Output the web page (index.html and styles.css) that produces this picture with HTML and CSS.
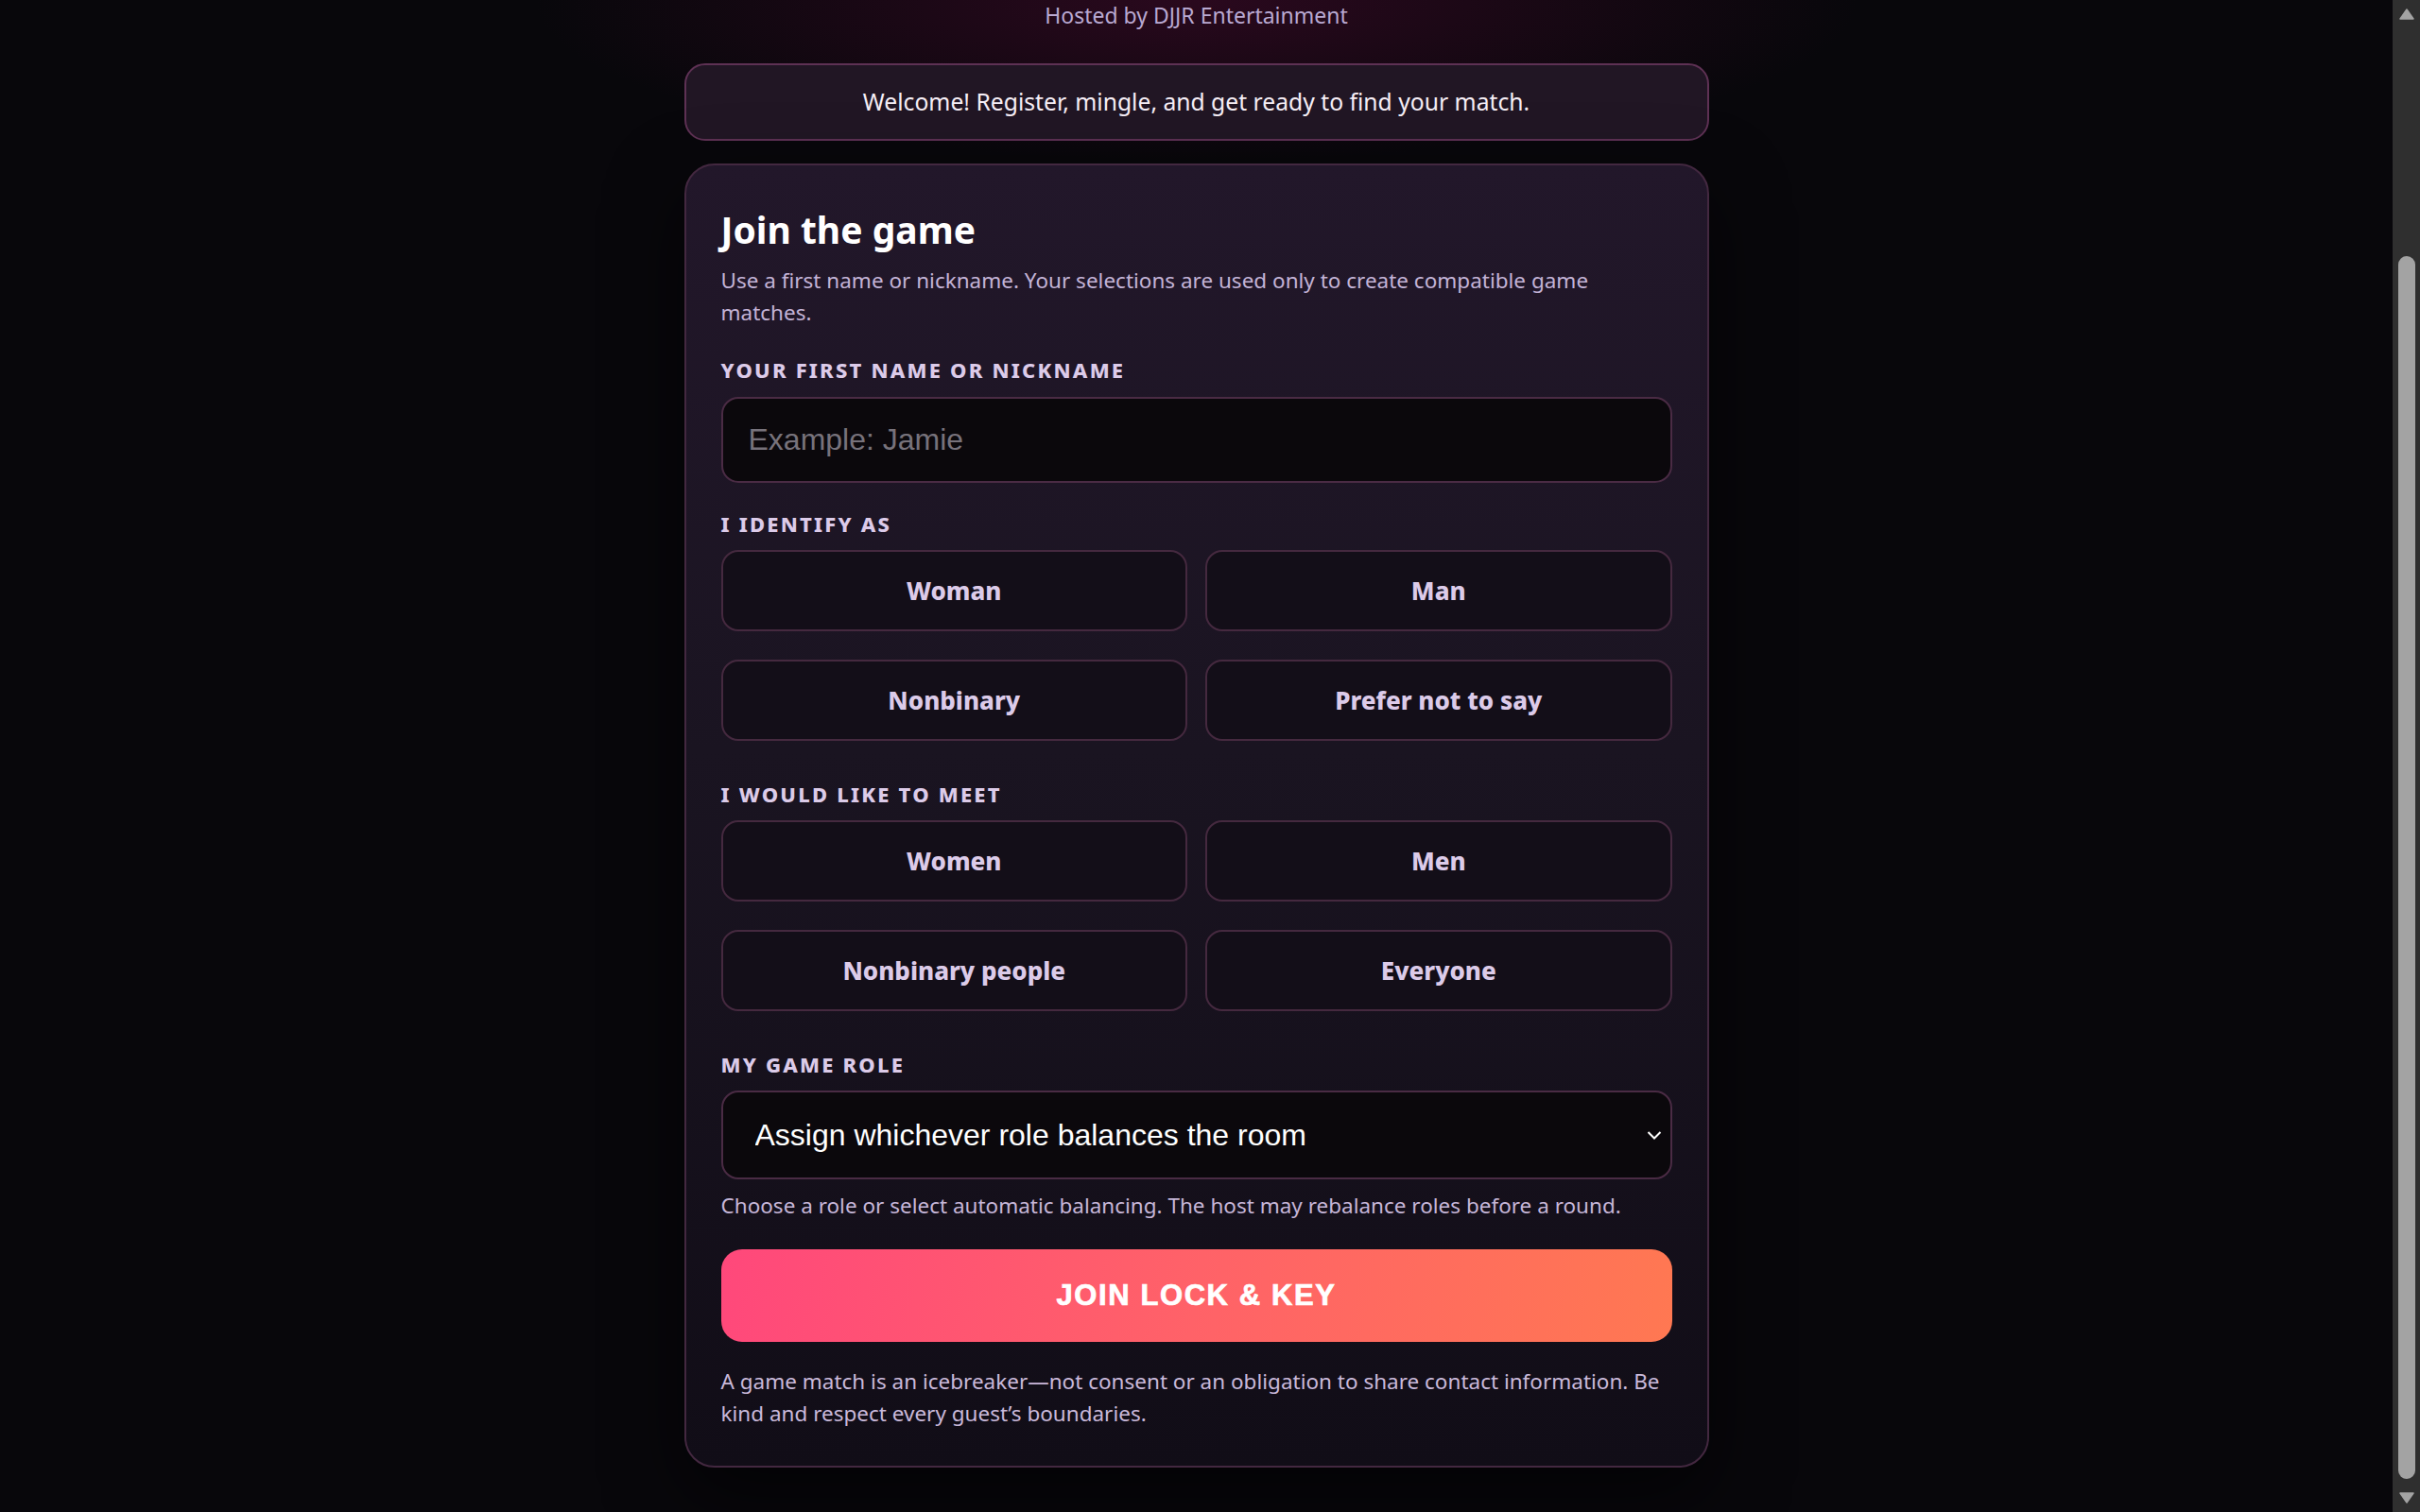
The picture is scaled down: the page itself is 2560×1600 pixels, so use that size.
FILE: index.html
```html
<!DOCTYPE html>
<html lang="en">
<head>
    <meta charset="UTF-8">
    <meta name="viewport" content="width=device-width, initial-scale=1.0">
    <title>Lock &amp; Key - Join the game</title>
    <link rel="stylesheet" href="styles.css">
</head>
<body>

    <div class="screen">
        <main class="page">
            <p class="host">Hosted by DJJR Entertainment</p>

            <div class="banner">Welcome! Register, mingle, and get ready to find your match.</div>

            <form class="card" onsubmit="return false">
                <h1>Join the game</h1>
                <p class="sub">Use a first name or nickname. Your selections are used only to create compatible game matches.</p>

                <label class="label" for="nickname">Your first name or nickname</label>
                <input type="text" id="nickname" class="field" placeholder="Example: Jamie">

                <p class="label">I identify as</p>
                <div class="options">
                    <button type="button" class="option">Woman</button>
                    <button type="button" class="option">Man</button>
                    <button type="button" class="option">Nonbinary</button>
                    <button type="button" class="option">Prefer not to say</button>
                </div>

                <p class="label label-wide">I would like to meet</p>
                <div class="options">
                    <button type="button" class="option">Women</button>
                    <button type="button" class="option">Men</button>
                    <button type="button" class="option">Nonbinary people</button>
                    <button type="button" class="option">Everyone</button>
                </div>

                <label class="label label-wide" for="role">My game role</label>
                <div class="select-wrap">
                    <select id="role" class="field select">
                        <option>Assign whichever role balances the room</option>
                        <option>Lock</option>
                        <option>Key</option>
                    </select>
                    <svg class="chevron" width="18" height="11" viewBox="0 0 18 11">
                        <path d="M2.5 2 L9 8.5 L15.5 2" fill="none" stroke="#ffffff" stroke-width="2"/>
                    </svg>
                </div>
                <p class="hint">Choose a role or select automatic balancing. The host may rebalance roles before a round.</p>

                <button type="submit" class="join">Join Lock &amp; Key</button>

                <p class="note">A game match is an icebreaker—not consent or an obligation to share contact information. Be kind and respect every guest’s boundaries.</p>
            </form>
        </main>

        <div class="rail">
            <div class="rail-btn">
                <svg width="16" height="12" viewBox="0 0 16 12"><path d="M8 1 L15 11 L1 11 Z" fill="#a3a3a3" stroke="#a3a3a3" stroke-width="1.5" stroke-linejoin="round"/></svg>
            </div>
            <div class="track"><div class="thumb"></div></div>
            <div class="rail-btn">
                <svg width="16" height="12" viewBox="0 0 16 12"><path d="M1 1 L15 1 L8 11 Z" fill="#a3a3a3" stroke="#a3a3a3" stroke-width="1.5" stroke-linejoin="round"/></svg>
            </div>
        </div>
    </div>

</body>
</html>
```

FILE: styles.css
```css
html, body {
    margin: 0;
    padding: 0;
    height: 100%;
    overflow: hidden;
}

body {
    font-family: "Noto Sans", "Open Sans", sans-serif;
    background-color: #08070b;
    color: #efe6f2;
}

.screen {
    display: flex;
    height: 100vh;
}

.page {
    flex: 1;
    display: flex;
    flex-direction: column;
    align-items: center;
    overflow: hidden;
    background:
        radial-gradient(ellipse 700px 170px at 50% 0, rgba(70, 10, 45, 0.55), rgba(40, 6, 28, 0) 100%),
        #08070b;
}

.host {
    margin: 0;
    font-size: 23px;
    line-height: 33px;
    color: #b9a9d2;
}

.banner {
    box-sizing: border-box;
    width: 1084px;
    margin-top: 34px;
    padding: 20px;
    border: 2px solid #5e3154;
    border-radius: 22px;
    background-color: #211624;
    text-align: center;
    font-size: 24.7px;
    line-height: 38px;
    color: #f6eef6;
}

.card {
    box-sizing: border-box;
    width: 1084px;
    margin-top: 24px;
    padding: 45px 37px 38px;
    border: 2px solid #432840;
    border-radius: 32px;
    background: linear-gradient(180deg, #22172a 0%, #1a1421 45%, #110d17 100%);
    box-shadow: 0 30px 80px rgba(0, 0, 0, 0.6);
    display: flex;
    flex-direction: column;
}

h1 {
    margin: 0;
    font-size: 39px;
    line-height: 46px;
    font-weight: 700;
    color: #ffffff;
}

.sub {
    margin: 14px 0 0;
    font-size: 22.5px;
    line-height: 34px;
    color: #c3b3d6;
}

.label {
    display: block;
    margin: 30px 0 0;
    font-size: 22px;
    line-height: 27px;
    font-weight: 800;
    letter-spacing: 0.1em;
    text-transform: uppercase;
    color: #dccbe9;
}

.label-wide {
    margin-top: 43px;
}

.field {
    box-sizing: border-box;
    width: 100%;
    height: 91px;
    margin-top: 15px;
    padding: 0 27px;
    border: 2px solid #4a2b44;
    border-radius: 18px;
    background-color: #0b080c;
    font-family: "Liberation Sans", Arial, sans-serif;
    font-size: 32px;
    color: #ffffff;
    outline: none;
}

.field::placeholder {
    color: #77727b;
}

.options {
    display: grid;
    grid-template-columns: 1fr 1fr;
    column-gap: 19px;
    row-gap: 30px;
    margin-top: 14px;
}

.option {
    height: 86px;
    border: 2px solid #45293f;
    border-radius: 18px;
    background-color: #130e18;
    font-family: "Noto Sans", "Open Sans", sans-serif;
    font-size: 26px;
    font-weight: 800;
    color: #dccbe9;
    cursor: pointer;
}

.select-wrap {
    position: relative;
    margin-top: 14px;
}

.select {
    height: 94px;
    margin-top: 0;
    padding-left: 34px;
    appearance: none;
    -webkit-appearance: none;
}

.chevron {
    position: absolute;
    right: 10px;
    top: 42px;
    pointer-events: none;
}

.hint {
    margin: 11px 0 0;
    font-size: 22.5px;
    line-height: 34px;
    color: #c6b6d8;
}

.join {
    height: 98px;
    margin-top: 29px;
    border: none;
    border-radius: 22px;
    background: linear-gradient(100deg, #ff487b 0%, #ff6268 50%, #ff7852 100%);
    font-family: "Liberation Sans", Arial, sans-serif;
    font-size: 31px;
    font-weight: 700;
    letter-spacing: 1.6px;
    -webkit-text-stroke: 0.7px #ffffff;
    text-transform: uppercase;
    color: #ffffff;
    cursor: pointer;
}

.note {
    margin: 25px 0 0;
    font-size: 22.5px;
    line-height: 34px;
    color: #c9b9da;
}

.rail {
    width: 29px;
    display: flex;
    flex-direction: column;
    background-color: #2f2f2f;
}

.rail-btn {
    height: 30px;
    display: flex;
    align-items: center;
    justify-content: center;
}

.track {
    flex: 1;
    display: flex;
    justify-content: center;
}

.thumb {
    width: 18px;
    height: 1294px;
    margin-top: 241px;
    border-radius: 9px;
    background-color: #a3a3a3;
}
```
